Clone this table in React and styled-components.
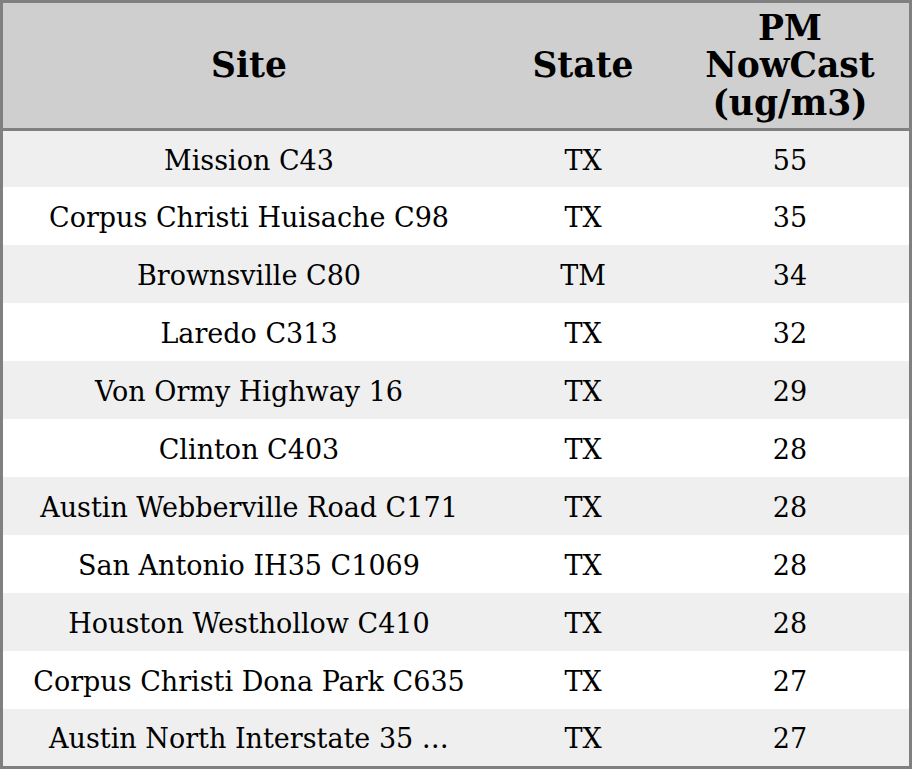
import React from "react";
import styled, { createGlobalStyle } from "styled-components";

const Global = createGlobalStyle`
  html, body { margin: 0; padding: 0; background: #ffffff; }
  body { font-family: "DejaVu Serif", serif; }
`;

const Frame = styled.div`
  width: 912px;
  height: 769px;
  box-sizing: border-box;
  border: 3px solid #808080;
  display: flex;
  flex-direction: column;
  font-family: "DejaVu Serif", serif;
  color: #000;
`;

const HeaderRow = styled.div`
  display: grid;
  grid-template-columns: 492px 176px 238px;
  height: 125px;
  background: #cfcfcf;
  border-bottom: 3px solid #808080;
`;

const HeadCell = styled.div`
  display: flex;
  align-items: center;
  justify-content: center;
  text-align: center;
  font-weight: bold;
  font-size: 34.5px;
  line-height: 37.5px;
  padding-top: 1px;
`;

const Body = styled.div`
  display: flex;
  flex-direction: column;
  flex: 1;
`;

const Row = styled.div`
  display: grid;
  grid-template-columns: 492px 176px 238px;
  height: 58px;
  background: ${(p) => (p.$striped ? "#efefef" : "#ffffff")};
  &:first-child { height: 56px; }
  &:last-child { height: 57px; }
`;

const Cell = styled.div`
  display: flex;
  align-items: center;
  justify-content: center;
  white-space: nowrap;
  font-size: 27px;
  padding-top: 2px;
`;

const rows = [
  ["Mission C43", "TX", "55"],
  ["Corpus Christi Huisache C98", "TX", "35"],
  ["Brownsville C80", "TM", "34"],
  ["Laredo C313", "TX", "32"],
  ["Von Ormy Highway 16", "TX", "29"],
  ["Clinton C403", "TX", "28"],
  ["Austin Webberville Road C171", "TX", "28"],
  ["San Antonio IH35 C1069", "TX", "28"],
  ["Houston Westhollow C410", "TX", "28"],
  ["Corpus Christi Dona Park C635", "TX", "27"],
  ["Austin North Interstate 35 …", "TX", "27"],
];

export default function App() {
  return (
    <>
      <Global />
      <Frame>
        <HeaderRow>
          <HeadCell>Site</HeadCell>
          <HeadCell>State</HeadCell>
          <HeadCell>
            PM
            <br />
            NowCast
            <br />
            (ug/m3)
          </HeadCell>
        </HeaderRow>
        <Body>
          {rows.map((r, i) => (
            <Row key={i} $striped={i % 2 === 0}>
              <Cell>{r[0]}</Cell>
              <Cell>{r[1]}</Cell>
              <Cell>{r[2]}</Cell>
            </Row>
          ))}
        </Body>
      </Frame>
    </>
  );
}
